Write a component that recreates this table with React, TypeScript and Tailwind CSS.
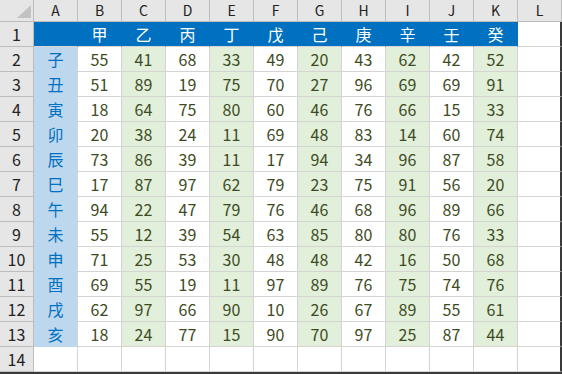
import React from "react"

const cols = ["A", "B", "C", "D", "E", "F", "G", "H", "I", "J", "K", "L"]
const stems = ["甲", "乙", "丙", "丁", "戊", "己", "庚", "辛", "壬", "癸"]
const branches = ["子", "丑", "寅", "卯", "辰", "巳", "午", "未", "申", "酉", "戌", "亥"]

const data = [
  [55, 41, 68, 33, 49, 20, 43, 62, 42, 52],
  [51, 89, 19, 75, 70, 27, 96, 69, 69, 91],
  [18, 64, 75, 80, 60, 46, 76, 66, 15, 33],
  [20, 38, 24, 11, 69, 48, 83, 14, 60, 74],
  [73, 86, 39, 11, 17, 94, 34, 96, 87, 58],
  [17, 87, 97, 62, 79, 23, 75, 91, 56, 20],
  [94, 22, 47, 79, 76, 46, 68, 96, 89, 66],
  [55, 12, 39, 54, 63, 85, 80, 80, 76, 33],
  [71, 25, 53, 30, 48, 48, 42, 16, 50, 68],
  [69, 55, 19, 11, 97, 89, 76, 75, 74, 76],
  [62, 97, 66, 90, 10, 26, 67, 89, 55, 61],
  [18, 24, 77, 15, 90, 70, 97, 25, 87, 44],
]

const font = { fontFamily: '"Noto Sans CJK TC", "Noto Sans", sans-serif' }

function Corner() {
  return (
    <div className="relative border-r border-b border-[#bdbdbd] bg-[#e6e6e6]">
      <svg className="absolute left-[17px] top-[5px]" width="14" height="13" viewBox="0 0 14 13">
        <polygon points="14,0 14,13 0,13" fill="#c2c2c2" />
      </svg>
    </div>
  )
}

function RowHead({ n }: { n: number }) {
  return (
    <div className="flex items-center justify-center border-r border-b border-[#bdbdbd] bg-[#e6e6e6] text-[16px] text-[#222]">
      {n}
    </div>
  )
}

export default function App() {
  const rows = []
  for (let r = 0; r < 14; r++) {
    const cells = [<RowHead key="h" n={r + 1} />]
    for (let c = 0; c < 12; c++) {
      const last = c === 11
      const edge = last ? " border-r-2 border-r-[#3a3a3a]" : ""
      let cls = "flex items-center justify-center border-r border-b text-[16px] "
      let text: React.ReactNode = ""
      if (r === 0) {
        if (c <= 10) {
          cls += "bg-[#0070c0] border-[#0070c0] border-b-[#d4d4d4] text-white text-[15px]"
          if (c >= 1) text = stems[c - 1]
        } else {
          cls += "bg-white border-[#d4d4d4]"
        }
      } else if (r <= 12) {
        if (c === 0) {
          cls += "bg-[#bdd7ee] border-[#bdd7ee] border-r-[#d4d4d4] text-[#0070c0] text-[15px]"
          text = branches[r - 1]
        } else if (c <= 10) {
          const green = c % 2 === 0
          cls += green ? "bg-[#e2efda] border-[#d4d4d4] text-[#3d4b22]" : "bg-white border-[#d4d4d4] text-[#3d4b22]"
          text = data[r - 1][c - 1]
        } else {
          cls += "bg-white border-[#d4d4d4]"
        }
      } else {
        cls += "bg-white border-[#d4d4d4]"
      }
      cells.push(
        <div key={c} className={cls + edge}>
          {text}
        </div>
      )
    }
    rows.push(...cells)
  }

  return (
    <div className="w-[562px] h-[374px] overflow-hidden bg-white" style={font}>
      <div className="grid grid-cols-[34px_repeat(11,44px)_44px] grid-rows-[22px_repeat(14,25px)]">
        <Corner />
        {cols.map((c) => (
          <div
            key={c}
            className="flex items-center justify-center border-r border-b border-[#bdbdbd] bg-[#e6e6e6] text-[14px] text-[#222]"
          >
            {c}
          </div>
        ))}
        {rows}
      </div>
      <div className="h-[2px] w-full bg-[#3a3a3a]" />
    </div>
  )
}
